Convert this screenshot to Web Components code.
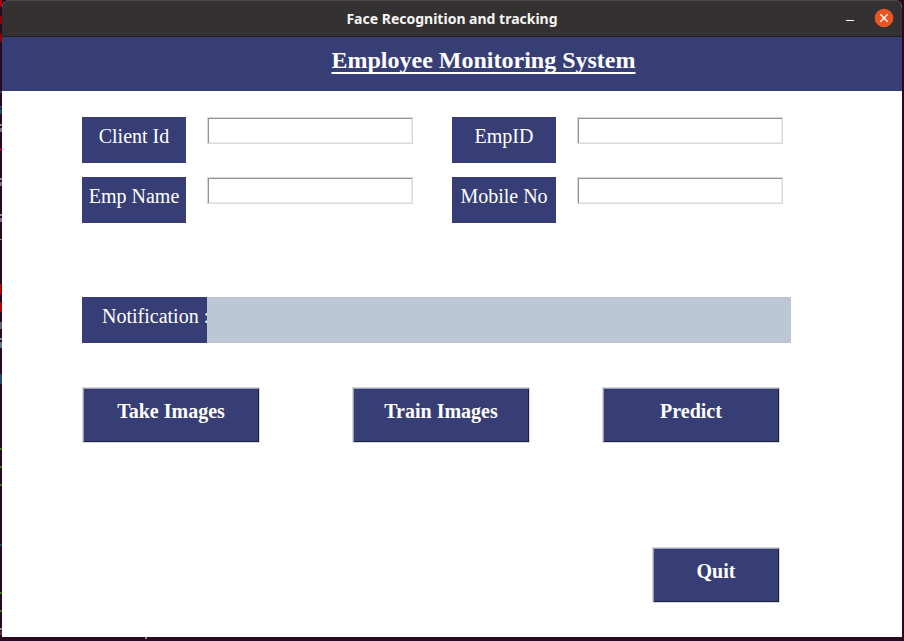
<!DOCTYPE html>
<html lang="en">
<head>
<meta charset="utf-8">
<title>Face Recognition and tracking</title>
<style>
  html, body { height: 100%; margin: 0; }
  body { --navy: #363e75; --mist: #bbc7d4; }
</style>
</head>
<body>
<desk-backdrop>
  <app-window caption="Face Recognition and tracking">
    <page-banner>Employee Monitoring System</page-banner>
    <employee-form>
      <form-field label="Client Id"></form-field>
      <form-field label="EmpID"></form-field>
      <form-field label="Emp Name"></form-field>
      <form-field label="Mobile No"></form-field>
    </employee-form>
    <notice-bar label="Notification :"></notice-bar>
    <action-row>
      <raised-button>Take Images</raised-button>
      <raised-button>Train Images</raised-button>
      <raised-button>Predict</raised-button>
    </action-row>
    <quit-row>
      <raised-button>Quit</raised-button>
    </quit-row>
  </app-window>
</desk-backdrop>

<script>
  const define = (name, markup, setup) => {
    const template = document.createElement('template');
    template.innerHTML = markup;
    customElements.define(name, class extends HTMLElement {
      constructor() {
        super();
        this.attachShadow({ mode: 'open' }).append(template.content.cloneNode(true));
      }
      connectedCallback() {
        if (setup) setup(this, this.shadowRoot);
      }
    });
  };

  // Terminal glyph edges that show beside the window: [top, height, colour]
  const specks = [
    [0, 6, '#b80008'], [16, 8, '#8c0008'], [34, 8, '#8c0008'],
    [91, 2, '#1f4a80'], [106, 2, '#1f4a80'], [109, 5, '#234878'],
    [124, 2, '#8f8794'], [128, 4, '#77708c'], [148, 3, '#b00010'],
    [178, 2, '#8f8794'], [182, 4, '#77708c'], [214, 2, '#8f8794'],
    [218, 4, '#77708c'], [239, 1, '#9a9088'], [284, 10, '#b00008'],
    [302, 10, '#b00008'], [322, 7, '#5c6478'], [338, 2, '#8f8794'],
    [342, 6, '#66708c'], [374, 10, '#234878'], [448, 2, '#3f7a08'],
    [466, 2, '#3f7a08'], [484, 2, '#3f7a08'], [544, 2, '#234878'],
    [592, 2, '#3f7a08'], [610, 2, '#3f7a08'], [628, 2, '#8f8794'],
    [631, 4, '#5c2848']
  ];
  const stops = specks.map(([y, h, c]) =>
    `transparent ${y}px, ${c} ${y}px, ${c} ${y + h}px, transparent ${y + h}px`).join(', ');

  define('desk-backdrop', `
    <style>
      :host {
        display: flex; box-sizing: border-box; min-height: 100%; height: 100%;
        padding: 0 2px 4px;
        background:
          linear-gradient(${stops}) 0 0 / 2px 100% no-repeat,
          linear-gradient(#8f8794, #8f8794) 145px calc(100% - 2px) / 2px 2px no-repeat,
          #2c0720;
      }
    </style>
    <slot></slot>`);

  define('app-window', `
    <style>
      :host { display: flex; flex-direction: column; flex: 1; min-width: 0; border-radius: 8px 8px 0 0; background: #fff; overflow: hidden; }
      header {
        display: grid; grid-template-columns: 72px 1fr 72px; align-items: center;
        box-sizing: border-box; height: 37px; flex: none;
        background: #333132; border-top: 1px solid #484647; border-bottom: 1px solid #222021;
        color: #f7f5f2; font: bold 14px/20px "Noto Sans", sans-serif;
      }
      .caption { grid-column: 2; text-align: center; white-space: nowrap; }
      .controls { display: flex; justify-content: flex-end; gap: 14px; padding: 0 8px 2px 0; }
      button { display: block; width: 20px; height: 20px; padding: 0; border: 0; background: none; }
      svg { display: block; }
      main { flex: 1; }
    </style>
    <header>
      <div class="caption"></div>
      <div class="controls">
        <button type="button" aria-label="Minimize"><svg width="20" height="20" viewBox="0 0 20 20"><path d="M6 12.5h8" stroke="#fff" fill="none"/></svg></button>
        <button type="button" aria-label="Close"><svg width="20" height="20" viewBox="0 0 20 20"><circle cx="10" cy="10" r="9.3" fill="#e95420"/><path d="M6.3 6.3l7.4 7.4M13.7 6.3l-7.4 7.4" stroke="#fff" stroke-width="1.4" fill="none"/></svg></button>
      </div>
    </header>
    <main><slot></slot></main>`,
    (host, root) => { root.querySelector('.caption').textContent = host.getAttribute('caption'); });

  define('page-banner', `
    <style>
      :host { display: block; box-sizing: border-box; height: 54px; padding: 8px 0 0 63px; background: var(--navy); }
      h1 {
        margin: 0; text-align: center; color: #fff;
        font: bold 24px/30px "Liberation Serif", serif;
        text-decoration: underline; text-decoration-thickness: 2px;
        text-decoration-skip-ink: none; text-underline-offset: 4px;
      }
    </style>
    <h1><slot></slot></h1>`);

  define('employee-form', `
    <style>
      :host { display: grid; grid-template-columns: 1fr 1fr; gap: 14px 39px; padding: 26px 119px 0 80px; }
    </style>
    <slot></slot>`);

  define('form-field', `
    <style>
      :host { display: flex; align-items: flex-start; gap: 21px; }
      label {
        box-sizing: border-box; flex: none; width: 104px; height: 46px; padding-top: 7px;
        background: var(--navy); color: #fff; text-align: center; white-space: nowrap;
        font: 20px/24px "Liberation Serif", serif;
      }
      input {
        box-sizing: border-box; flex: 1; min-width: 0; width: 0; height: 27px; margin: 0; padding: 0 4px;
        border: 1px solid #d9d9d9; border-radius: 0; outline: 0; background: #fff;
        box-shadow: inset 1px 1px #929292, inset -1px -1px #ececec;
        font: 20px/24px "Liberation Serif", serif;
      }
    </style>
    <label for="field"></label><input id="field" type="text">`,
    (host, root) => { root.querySelector('label').textContent = host.getAttribute('label'); });

  define('notice-bar', `
    <style>
      :host { display: flex; height: 46px; margin: 74px 111px 0 80px; }
      .label {
        box-sizing: border-box; flex: none; width: 125px; padding: 7px 0 0 20px; overflow: hidden;
        background: var(--navy); color: #fff; white-space: nowrap;
        font: 20px/24px "Liberation Serif", serif;
      }
      output { flex: 1; background: var(--mist); }
    </style>
    <label class="label" for="message"></label><output id="message"></output>`,
    (host, root) => { root.querySelector('.label').textContent = host.getAttribute('label'); });

  define('raised-button', `
    <style>
      :host { display: block; }
      button {
        display: block; box-sizing: border-box; width: 100%; height: 56px; margin: 0; padding: 0 0 8px;
        border: 1px solid #d9d9d9; border-radius: 0; background: var(--navy); color: #fff;
        box-shadow: inset 1px 1px #989cb4, inset -1px -1px #1c1f3e;
        font: bold 20px/24px "Liberation Serif", serif;
      }
    </style>
    <button type="button"><slot></slot></button>`);

  define('action-row', `
    <style>
      :host { display: grid; grid-template-columns: 270fr 250fr 178px; padding: 44px 122px 0 80px; }
      ::slotted(raised-button) { width: 178px; }
    </style>
    <slot></slot>`);

  define('quit-row', `
    <style>
      :host { display: flex; justify-content: flex-end; padding: 104px 122px 34px 80px; }
      ::slotted(raised-button) { width: 128px; }
    </style>
    <slot></slot>`);
</script>
</body>
</html>
